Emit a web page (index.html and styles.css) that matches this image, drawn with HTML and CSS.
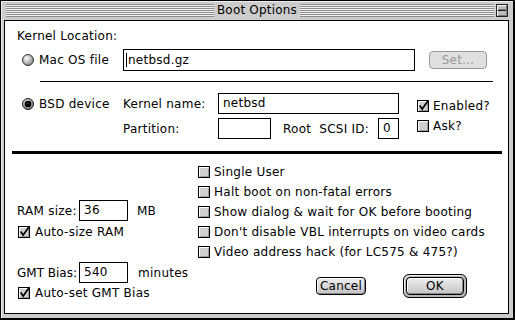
FILE: index.html
```html
<!DOCTYPE html>
<html>
<head>
<meta charset="utf-8">
<link rel="stylesheet" href="styles.css">
</head>
<body>
<div class="window">
  <div class="titlebar">
    <div class="stripes s1"></div>
    <div class="title">Boot Options</div>
    <div class="stripes s2"></div>
    <svg class="zoombox" width="12" height="13" viewBox="0 0 12 13">
      <rect x="0.5" y="0.5" width="11" height="12" fill="#bbb" stroke="#222"/>
      <path d="M1.5 11.5V1.5H10.5" stroke="#fff" fill="none"/>
      <path d="M1.5 6.5H10.5" stroke="#222" fill="none"/>
      <path d="M2.5 5.5H10.5V1.5" stroke="#777" fill="none"/>
      <path d="M2.5 11.5H10.5V7.5" stroke="#777" fill="none"/>
    </svg>
  </div>
  <div class="content">
    <div class="heading">Kernel Location:</div>
    <div class="row-mac">
      <svg class="radio" width="12" height="12" viewBox="0 0 12 12">
        <defs><radialGradient id="rg1" cx="0.38" cy="0.35" r="0.65"><stop offset="0" stop-color="#fff"/><stop offset="1" stop-color="#8a8a8a"/></radialGradient></defs>
        <circle cx="6" cy="6" r="5.5" fill="url(#rg1)" stroke="#333"/>
      </svg>
      <span class="rlabel">Mac OS file</span>
      <div class="field f-path"><span class="caret"></span>netbsd.gz</div>
      <div class="btn btn-set">Set...</div>
    </div>
    <div class="sep-thin"></div>
    <div class="bsd">
      <div class="bsd-radio">
        <svg class="radio" width="12" height="12" viewBox="0 0 12 12">
          <defs><radialGradient id="rg2" cx="0.38" cy="0.35" r="0.65"><stop offset="0" stop-color="#eee"/><stop offset="1" stop-color="#777"/></radialGradient></defs>
          <circle cx="6" cy="6" r="5.5" fill="url(#rg2)" stroke="#222"/>
          <circle cx="6" cy="6" r="3.3" fill="#000"/>
          <circle cx="5.3" cy="5.2" r="0.8" fill="#555"/>
        </svg>
        <span class="rlabel">BSD device</span>
      </div>
      <div class="lbl">Kernel name:</div>
      <div class="field f-kname">netbsd</div>
      <div class="side-checks">
        <div class="check">
          <svg class="cb" width="12" height="12" viewBox="0 0 12 12">
            <rect x="0.5" y="0.5" width="11" height="11" fill="#d0d0d0" stroke="#000"/>
            <path d="M1.5 10.5V1.5H10.5" stroke="#fff" fill="none"/>
            <path d="M2.5 10.5H10.5V2.5" stroke="#999" fill="none"/>
            <path d="M2.6 5.6L5.2 9L11.2 0.6" stroke="#000" stroke-width="1.7" fill="none"/>
          </svg>
          <span>Enabled?</span>
        </div>
        <div class="check">
          <svg class="cb" width="12" height="12" viewBox="0 0 12 12">
            <rect x="0.5" y="0.5" width="11" height="11" fill="#d0d0d0" stroke="#000"/>
            <path d="M1.5 10.5V1.5H10.5" stroke="#fff" fill="none"/>
            <path d="M2.5 10.5H10.5V2.5" stroke="#999" fill="none"/>
          </svg>
          <span>Ask?</span>
        </div>
      </div>
      <div></div>
      <div class="lbl">Partition:</div>
      <div class="part-row">
        <div class="field f-part"></div>
        <span class="root-lbl">Root&nbsp;&nbsp;SCSI ID:</span>
        <div class="field f-scsi">0</div>
      </div>
    </div>
    <div class="sep-thick"></div>
    <div class="lower">
      <div class="left-col">
        <div class="frow r-ram">
          <span class="flbl">RAM size:</span>
          <div class="field f-small">36</div>
          <span class="unit u-mb">MB</span>
        </div>
        <div class="check c-auto1">
          <svg class="cb" width="12" height="12" viewBox="0 0 12 12">
            <rect x="0.5" y="0.5" width="11" height="11" fill="#d0d0d0" stroke="#000"/>
            <path d="M1.5 10.5V1.5H10.5" stroke="#fff" fill="none"/>
            <path d="M2.5 10.5H10.5V2.5" stroke="#999" fill="none"/>
            <path d="M2.6 5.6L5.2 9L11.2 0.6" stroke="#000" stroke-width="1.7" fill="none"/>
          </svg>
          <span>Auto-size RAM</span>
        </div>
        <div class="frow r-gmt">
          <span class="flbl tight">GMT Bias:</span>
          <div class="field f-small">540</div>
          <span class="unit u-min">minutes</span>
        </div>
        <div class="check c-auto2">
          <svg class="cb" width="12" height="12" viewBox="0 0 12 12">
            <rect x="0.5" y="0.5" width="11" height="11" fill="#d0d0d0" stroke="#000"/>
            <path d="M1.5 10.5V1.5H10.5" stroke="#fff" fill="none"/>
            <path d="M2.5 10.5H10.5V2.5" stroke="#999" fill="none"/>
            <path d="M2.6 5.6L5.2 9L11.2 0.6" stroke="#000" stroke-width="1.7" fill="none"/>
          </svg>
          <span>Auto-set GMT Bias</span>
        </div>
      </div>
      <div class="right-col">
        <div class="opt-list">
          <div class="opt"><svg class="cb" width="12" height="12" viewBox="0 0 12 12"><rect x="0.5" y="0.5" width="11" height="11" fill="#d0d0d0" stroke="#000"/><path d="M1.5 10.5V1.5H10.5" stroke="#fff" fill="none"/><path d="M2.5 10.5H10.5V2.5" stroke="#999" fill="none"/></svg><span>Single User</span></div>
          <div class="opt"><svg class="cb" width="12" height="12" viewBox="0 0 12 12"><rect x="0.5" y="0.5" width="11" height="11" fill="#d0d0d0" stroke="#000"/><path d="M1.5 10.5V1.5H10.5" stroke="#fff" fill="none"/><path d="M2.5 10.5H10.5V2.5" stroke="#999" fill="none"/></svg><span>Halt boot on non-fatal errors</span></div>
          <div class="opt"><svg class="cb" width="12" height="12" viewBox="0 0 12 12"><rect x="0.5" y="0.5" width="11" height="11" fill="#d0d0d0" stroke="#000"/><path d="M1.5 10.5V1.5H10.5" stroke="#fff" fill="none"/><path d="M2.5 10.5H10.5V2.5" stroke="#999" fill="none"/></svg><span>Show dialog &amp; wait for OK before booting</span></div>
          <div class="opt"><svg class="cb" width="12" height="12" viewBox="0 0 12 12"><rect x="0.5" y="0.5" width="11" height="11" fill="#d0d0d0" stroke="#000"/><path d="M1.5 10.5V1.5H10.5" stroke="#fff" fill="none"/><path d="M2.5 10.5H10.5V2.5" stroke="#999" fill="none"/></svg><span>Don't disable VBL interrupts on video cards</span></div>
          <div class="opt"><svg class="cb" width="12" height="12" viewBox="0 0 12 12"><rect x="0.5" y="0.5" width="11" height="11" fill="#d0d0d0" stroke="#000"/><path d="M1.5 10.5V1.5H10.5" stroke="#fff" fill="none"/><path d="M2.5 10.5H10.5V2.5" stroke="#999" fill="none"/></svg><span>Video address hack (for LC575 &amp; 475?)</span></div>
        </div>
        <div class="buttons">
          <div class="btn btn-cancel">Cancel</div>
          <div class="default-ring"><div class="btn btn-ok">OK</div></div>
        </div>
      </div>
    </div>
  </div>
</div>
</body>
</html>
```
FILE: styles.css
```css
html, body {
  margin: 0;
  padding: 0;
  background: #fff;
}
.window {
  width: 515px;
  height: 320px;
  box-sizing: border-box;
  border-style: solid;
  border-color: #000;
  border-width: 1px 2px 2px 1px;
  background: #cccccc;
  padding: 0 4px 4px 3px;
  display: flex;
  flex-direction: column;
  font-family: "DejaVu Sans", sans-serif;
  font-size: 12px;
  color: #000;
  box-shadow: inset 1px 1px 0 #eeeeee;
}
.titlebar {
  height: 19px;
  display: flex;
  align-items: center;
  padding-left: 2px;
}
.stripes {
  height: 13px;
  background: repeating-linear-gradient(to bottom, #8c8c8c 0 1px, #f2f2f2 1px 2px);
}
.s1 { width: 208px; }
.s2 { width: 194px; }
.title {
  width: 86px;
  text-align: center;
  font-size: 12px;
  line-height: 13px;
  letter-spacing: 0.2px;
}
.zoombox {
  margin-left: 2px;
  display: block;
}
.content {
  flex: 1;
  border: 1px solid #000;
  background: #fff;
  letter-spacing: 0.25px;
}
.heading {
  margin: 7px 0 0 12px;
  height: 16px;
  line-height: 16px;
}
.row-mac {
  display: flex;
  align-items: center;
  height: 22px;
  margin-top: 5px;
  padding-left: 17px;
}
.radio { display: block; flex: none; }
.rlabel {
  margin-left: 5px;
  width: 84px;
  flex: none;
}
.field {
  box-sizing: border-box;
  border: 1px solid #000;
  background: #fff;
  height: 21px;
  line-height: 19px;
  padding-left: 4px;
  display: flex;
  align-items: center;
  flex: none;
}
.f-path {
  width: 292px;
  height: 22px;
  padding-left: 2px;
}
.caret {
  width: 1px;
  height: 14px;
  background: #000;
  margin-right: 1px;
}
.btn {
  box-sizing: border-box;
  border: 1px solid #000;
  border-radius: 4px;
  background: linear-gradient(#eeeeee, #c4c4c4);
  box-shadow: inset 1px 1px 0 #fff, inset -1px -1px 0 #8a8a8a;
  display: flex;
  align-items: center;
  justify-content: center;
  flex: none;
}
.btn-set {
  margin-left: 14px;
  width: 58px;
  height: 18px;
  border-color: #9a9a9a;
  background: #e0e0e0;
  box-shadow: none;
  color: #9a9a9a;
}
.sep-thin {
  margin: 10px 0 0 35px;
  width: 453px;
  height: 1px;
  background: #000;
}
.bsd {
  margin-top: 11px;
  padding-left: 17px;
  display: grid;
  grid-template-columns: 101px 95px 181px 1fr;
  grid-template-rows: 21px 21px;
  row-gap: 4px;
  align-items: center;
}
.bsd-radio {
  display: flex;
  align-items: center;
}
.f-kname { width: 181px; }
.side-checks {
  grid-row: 1 / span 2;
  grid-column: 4;
  align-self: start;
  padding: 5px 0 0 18px;
  display: flex;
  flex-direction: column;
  gap: 4px;
}
.check {
  display: flex;
  align-items: center;
  height: 16px;
}
.check span { margin-left: 4px; white-space: nowrap; }
.cb { display: block; flex: none; overflow: visible; }
.part-row {
  display: flex;
  align-items: center;
}
.f-part { width: 53px; }
.root-lbl {
  margin-left: 12px;
  flex: 1;
  white-space: nowrap;
}
.f-scsi { width: 21px; }
.sep-thick {
  margin: 12px 0 0 7px;
  width: 490px;
  height: 3px;
  background: #000;
}
.lower {
  display: grid;
  grid-template-columns: 193px 1fr;
}
.left-col {
  padding-left: 12px;
}
.frow {
  display: flex;
  align-items: center;
  height: 21px;
}
.r-ram { margin-top: 46px; }
.r-gmt { margin-top: 22px; }
.flbl { width: 62px; flex: none; white-space: nowrap; }
.flbl.tight { letter-spacing: 0; }
.f-small { width: 49px; }
.u-mb { margin-left: 9px; }
.u-min { margin-left: 10px; }
.c-auto1 { margin: 3px 0 0 1px; }
.c-auto2 { margin: 2px 0 0 1px; }
.check.c-auto1 span, .check.c-auto2 span { margin-left: 5px; }
.opt-list {
  margin-top: 8px;
  display: flex;
  flex-direction: column;
}
.opt {
  height: 20px;
  display: flex;
  align-items: center;
}
.opt span { margin-left: 4px; white-space: nowrap; }
.buttons {
  margin-top: 12px;
  display: flex;
  align-items: center;
  padding-left: 118px;
}
.btn-cancel {
  width: 50px;
  height: 18px;
}
.default-ring {
  margin-left: 37px;
  box-sizing: border-box;
  width: 64px;
  height: 24px;
  border: 1px solid #000;
  border-radius: 6px;
  padding: 2px;
  background: #b8b8b8;
  box-shadow: inset 1px 1px 0 #eee;
  display: flex;
}
.btn-ok {
  flex: 1;
  height: 18px;
}
```
